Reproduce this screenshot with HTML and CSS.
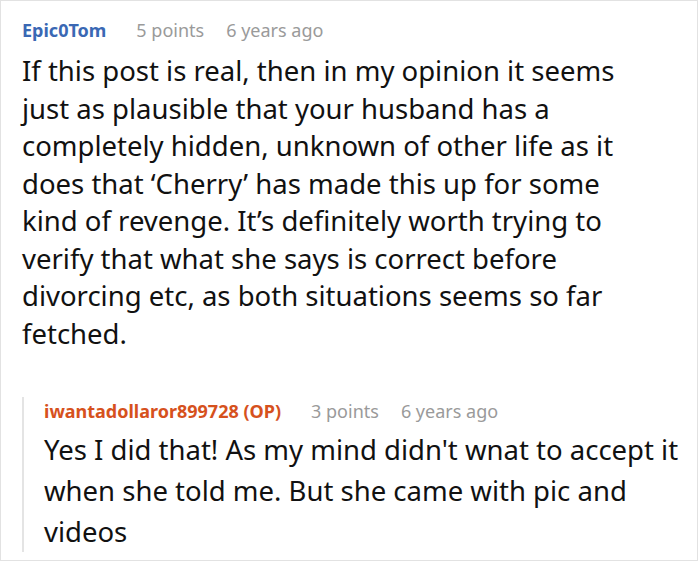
FILE: index.html
```html
<!DOCTYPE html>
<html>
<head>
<meta charset="utf-8">
<link rel="stylesheet" href="styles.css">
</head>
<body>
<div class="thread">
  <div class="comment">
    <div class="meta">
      <span class="author">Epic0Tom</span>
      <span class="info">5 points</span>
      <span class="info">6 years ago</span>
    </div>
    <p class="text main-text">If this post is real, then in my opinion it seems just as plausible that your husband has a completely hidden, unknown of other life as it does that ‘Cherry’ has made this up for some kind of revenge. It’s definitely worth trying to verify that what she says is correct before divorcing etc, as both situations seems so far fetched.</p>
  </div>
  <div class="reply">
    <div class="meta reply-meta">
      <span class="author op">iwantadollaror899728 (OP)</span>
      <span class="info">3 points</span>
      <span class="info">6 years ago</span>
    </div>
    <p class="text reply-text">Yes I did that! As my mind didn't wnat to accept it when she told me. But she came with pic and videos</p>
  </div>
</div>
</body>
</html>
```
FILE: styles.css
```css
html, body {
  margin: 0;
  padding: 0;
  background: #fff;
}
body {
  font-family: "Noto Sans", "Open Sans", sans-serif;
  color: #111;
}
.thread {
  box-sizing: border-box;
  width: 698px;
  height: 561px;
  border: 1px solid #e2e2e2;
  padding: 15px 10px 0 21px;
  overflow: hidden;
}
.meta {
  display: flex;
  gap: 22px;
  font-size: 18px;
  line-height: 28px;
}
.author {
  font-weight: 700;
  color: #3a68b4;
  margin-right: 8px;
}
.author.op {
  color: #d6511d;
}
.info {
  color: #9a9a9a;
}
.text {
  margin: 8px 0 0;
  font-size: 27.5px;
  line-height: 37.5px;
}
.main-text {
  max-width: 630px;
}
.reply {
  margin-top: 58px;
  border-left: 2px solid #e4e4e4;
  padding-left: 20px;
}
.reply-meta {
  margin-top: -13px;
}
.reply-text {
  line-height: 41px;
  margin-top: 4px;
  margin-bottom: -9px;
}
```
